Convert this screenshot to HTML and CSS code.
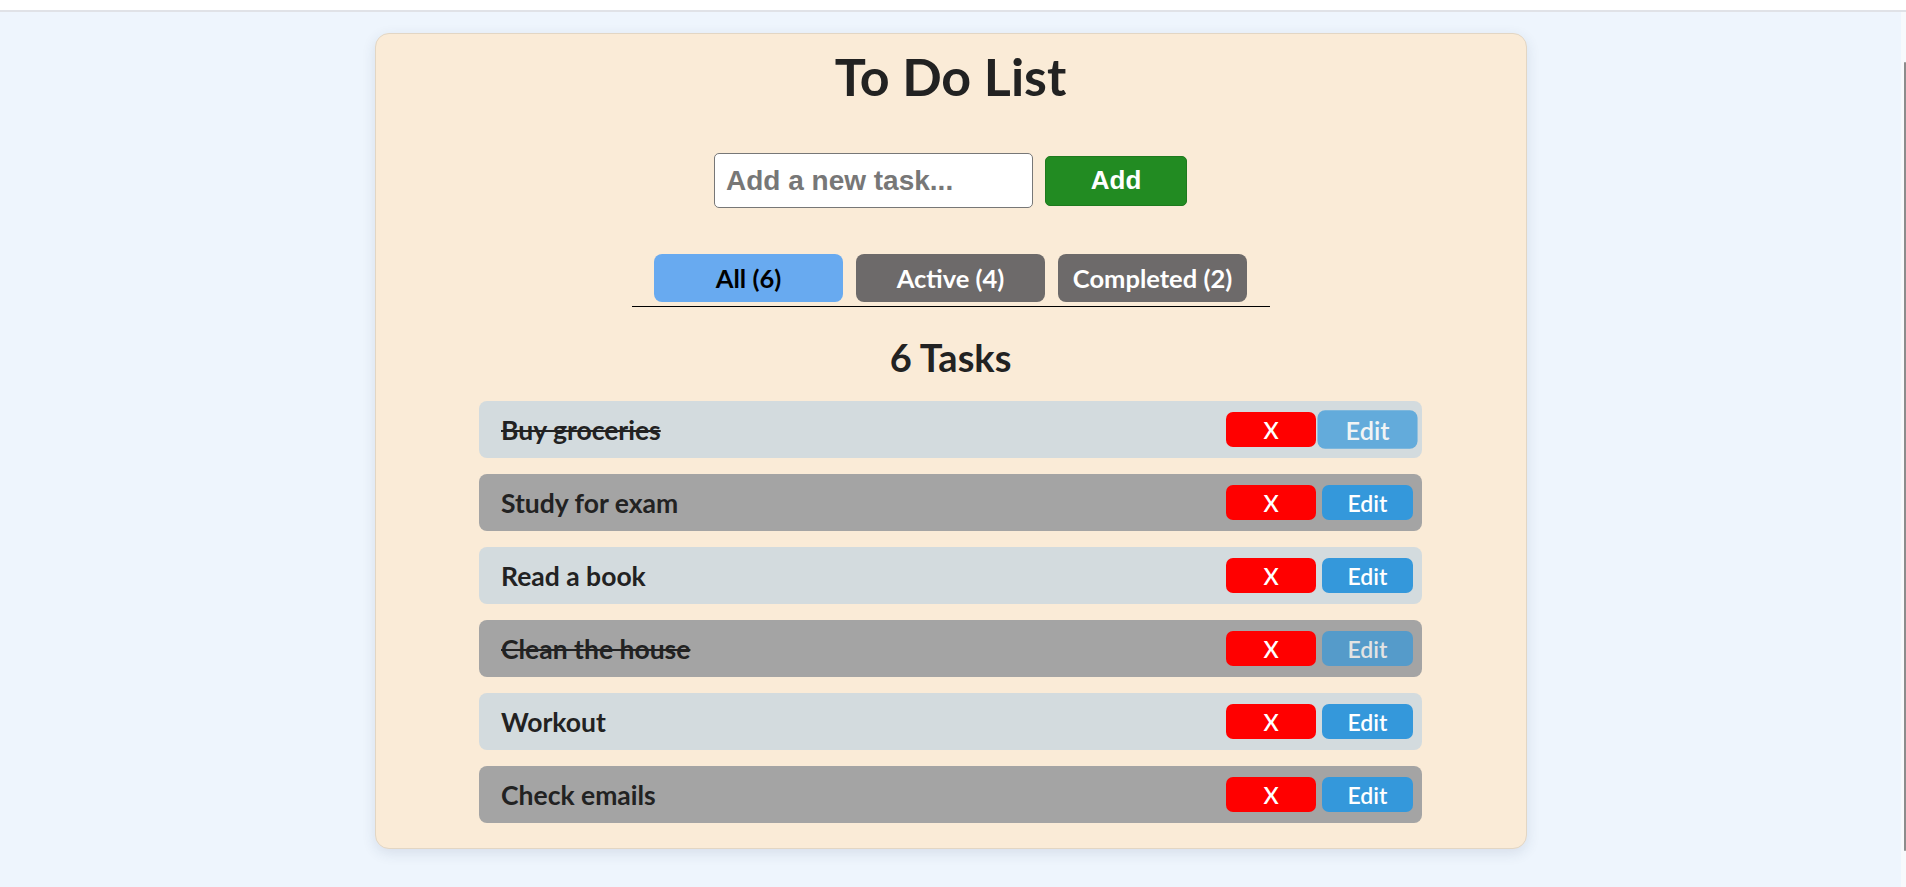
FILE: index.html
```html
<!DOCTYPE html>
<html lang="en">
<head>
<meta charset="utf-8">
<title>To Do List</title>
<link rel="stylesheet" href="styles.css">
</head>
<body>
<div class="topbar"></div>
<div class="viewport">
  <main class="page">
    <section class="card">
      <h1 class="title">To Do List</h1>
      <form class="add-row">
        <input class="task-input" type="text" placeholder="Add a new task...">
        <button class="add-btn" type="button">Add</button>
      </form>
      <nav class="tabs">
        <button class="tab tab--active" type="button">All (6)</button>
        <button class="tab" type="button">Active (4)</button>
        <button class="tab" type="button">Completed (2)</button>
      </nav>
      <h2 class="count">6 Tasks</h2>
      <ul class="list">
        <li class="item item--light">
          <span class="item-text item-text--done">Buy groceries</span>
          <button class="btn-del" type="button">X</button>
          <button class="btn-edit btn-edit--disabled btn-edit--hover" type="button">Edit</button>
        </li>
        <li class="item item--dark">
          <span class="item-text">Study for exam</span>
          <button class="btn-del" type="button">X</button>
          <button class="btn-edit" type="button">Edit</button>
        </li>
        <li class="item item--light">
          <span class="item-text">Read a book</span>
          <button class="btn-del" type="button">X</button>
          <button class="btn-edit" type="button">Edit</button>
        </li>
        <li class="item item--dark">
          <span class="item-text item-text--done">Clean the house</span>
          <button class="btn-del" type="button">X</button>
          <button class="btn-edit btn-edit--disabled" type="button">Edit</button>
        </li>
        <li class="item item--light">
          <span class="item-text">Workout</span>
          <button class="btn-del" type="button">X</button>
          <button class="btn-edit" type="button">Edit</button>
        </li>
        <li class="item item--dark">
          <span class="item-text">Check emails</span>
          <button class="btn-del" type="button">X</button>
          <button class="btn-edit" type="button">Edit</button>
        </li>
      </ul>
    </section>
  </main>
  <div class="scrollbar"><div class="scrollbar-thumb"></div></div>
</div>
</body>
</html>
```
FILE: styles.css
```css
* { box-sizing: border-box; }
html, body {
  margin: 0;
  padding: 0;
  height: 100%;
}
body {
  font-family: "Lato", "Open Sans", sans-serif;
  color: #222;
  background: #eef5fd;
  display: flex;
  flex-direction: column;
  overflow: hidden;
}
.topbar {
  height: 12px;
  background: #fff;
  border-bottom: 2px solid #e0e2e7;
  flex: none;
}
.viewport {
  flex: 1;
  display: flex;
}
.page {
  flex: 1;
  padding-top: 21px;
}
.scrollbar {
  width: 5px;
  background: #f7f9fc;
  padding: 50px 0 36px;
  display: flex;
  justify-content: flex-end;
}
.scrollbar-thumb {
  width: 2px;
  background: #8c8c8c;
  border-radius: 1px;
}
.card {
  width: 1152px;
  margin: 0 auto;
  background: #faebd7;
  border: 1px solid #e2d6c4;
  border-radius: 14px;
  box-shadow: 0 4px 14px rgba(40, 60, 90, 0.12);
  padding: 11px 0 25px;
  display: flex;
  flex-direction: column;
  align-items: center;
}
.title {
  margin: 0;
  font-size: 52px;
  line-height: 62px;
  font-weight: 700;
  color: #222;
}
.add-row {
  margin: 46px 0 0;
  display: flex;
  align-items: center;
  gap: 12px;
}
.task-input {
  width: 319px;
  height: 55px;
  border: 1px solid #777;
  border-radius: 5px;
  background: #fff;
  padding: 0 11px;
  font-family: "Liberation Sans", Arial, sans-serif;
  font-size: 28px;
  font-weight: 700;
  color: #333;
}
.task-input::placeholder { color: #777; }
.add-btn {
  width: 142px;
  height: 50px;
  border: 1px solid #1e7a1e;
  border-radius: 5px;
  background: #228b22;
  color: #fff;
  font-family: "Liberation Sans", Arial, sans-serif;
  font-size: 26px;
  font-weight: 700;
  padding: 0;
}
.tabs {
  margin-top: 46px;
  width: 638px;
  display: flex;
  justify-content: center;
  gap: 13px;
  padding-bottom: 4px;
  border-bottom: 1px solid #000;
}
.tab {
  width: 189px;
  height: 48px;
  border: none;
  border-radius: 8px;
  background: #6d6a6a;
  color: #fff;
  font-family: "Lato", "Open Sans", sans-serif;
  font-size: 25.5px;
  font-weight: 700;
  padding: 0;
}
.tab--active {
  background: #68aaf0;
  color: #000;
}
.count {
  margin: 27px 0 0;
  font-size: 38px;
  line-height: 46px;
  font-weight: 700;
  color: #222;
}
.list {
  list-style: none;
  margin: 21px 0 0;
  padding: 0;
  width: 943px;
  display: flex;
  flex-direction: column;
  gap: 16px;
}
.item {
  height: 57px;
  border-radius: 8px;
  display: flex;
  align-items: center;
  gap: 6px;
  padding: 0 9px 0 22px;
}
.item--light { background: #d3dbde; }
.item--dark { background: #a4a4a4; }
.item-text {
  flex: 1;
  font-size: 26.5px;
  font-weight: 700;
  color: #222;
}
.item-text--done { text-decoration: line-through; }
.btn-del,
.btn-edit {
  height: 35px;
  border: none;
  border-radius: 7px;
  color: #fff;
  font-family: "Lato", "Open Sans", sans-serif;
  font-size: 23px;
  font-weight: 600;
  padding: 0;
}
.btn-del {
  width: 90px;
  background: #ff0000;
}
.btn-edit {
  width: 91px;
  background: #3498db;
}
.btn-edit--disabled { opacity: 0.7; }
.btn-edit--hover { transform: scale(1.1); }
```
